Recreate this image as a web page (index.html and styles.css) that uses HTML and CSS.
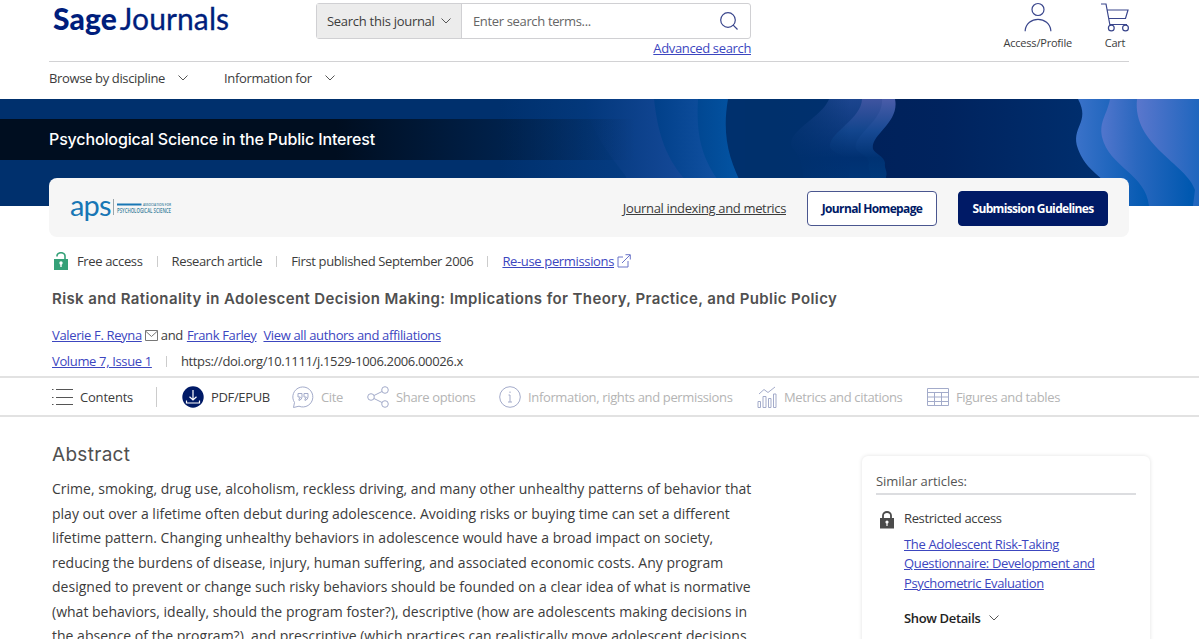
FILE: index.html
```html
<!DOCTYPE html>
<html lang="en">
  <head>
    <meta charset="UTF-8" />
    <meta name="viewport" content="width=device-width, initial-scale=1.0" />
    <title>Risk and Rationality in Adolescent Decision Making</title>
    <link rel="stylesheet" href="styles.css">
  </head>
  <body>
    <header class="header">
      <div class="header-top">
        <a class="logo"><b>Sage</b><span>Journals</span></a>
        <div class="search">
          <div class="search-box">
            <div class="search-scope">
              <span>Search this journal</span>
              <svg class="chevron" width="10" height="6" viewBox="0 0 10 6"><path d="M.5.5 5 5 9.5.5" /></svg>
            </div>
            <div class="search-field">
              <span>Enter search terms...</span>
              <svg class="line-icon" width="18" height="18" viewBox="0 0 18 18"><circle cx="8" cy="8" r="7.3" /><path d="m13.2 13.2 4.3 4.3" /></svg>
            </div>
          </div>
          <a class="link">Advanced search</a>
        </div>
        <div class="user-links">
          <a class="user-link">
            <svg class="line-icon" width="28" height="30" viewBox="0 0 28 30"><circle cx="14" cy="7.500" r="6" /><path d="M1.200 29.200v-1C2 21.500 7.500 17.300 14 17.300s12 4.200 12.800 10.900v1" /></svg>
            <span>Access/Profile</span>
          </a>
          <a class="user-link">
            <svg class="line-icon" width="28" height="30" viewBox="0 0 28 30"><path d="M0 2h5l4 21.500M6.500 8H27l-2.500 8.500H8M9 22.500h17" /><circle cx="10.300" cy="26" r="2.900" /><circle cx="24.500" cy="26" r="2.900" /></svg>
            <span>Cart</span>
          </a>
        </div>
      </div>
      <nav class="nav">
        <a>Browse by discipline <svg class="chevron" width="10" height="6" viewBox="0 0 10 6"><path d="M.5.5 5 5 9.5.5" /></svg></a>
        <a>Information for <svg class="chevron" width="10" height="6" viewBox="0 0 10 6"><path d="M.5.5 5 5 9.5.5" /></svg></a>
      </nav>
    </header>

    <section class="banner">
      <svg class="banner-art" width="1199" height="107" viewBox="0 0 1199 107">
        <defs>
          <linearGradient id="wave1" gradientUnits="userSpaceOnUse" x1="500" x2="640"><stop offset="0" stop-color="#00306d" /><stop offset="1" stop-color="#053d84" /></linearGradient>
          <linearGradient id="wave2" gradientUnits="userSpaceOnUse" x1="570" x2="690"><stop offset="0" stop-color="#003577" /><stop offset="1" stop-color="#164a9a" /></linearGradient>
          <linearGradient id="wave3" gradientUnits="userSpaceOnUse" x1="650" x2="728"><stop offset="0" stop-color="#003f88" /><stop offset="1" stop-color="#1453a5" /></linearGradient>
          <linearGradient id="wave4" gradientUnits="userSpaceOnUse" x1="690" x2="745"><stop offset="0" stop-color="#00458f" /><stop offset="1" stop-color="#0456a6" /></linearGradient>
          <linearGradient id="face1" x2="0" y2="1"><stop offset="0" stop-color="#4a5ca8" /><stop offset=".3" stop-color="#174993" /><stop offset=".55" stop-color="#003273" /><stop offset="1" stop-color="#014184" /></linearGradient>
          <linearGradient id="face2" x2="0" y2="1"><stop offset="0" stop-color="#3f54a0" /><stop offset=".3" stop-color="#12458d" /><stop offset=".55" stop-color="#003071" /><stop offset="1" stop-color="#003d80" /></linearGradient>
          <linearGradient id="face3" x2="0" y2="1"><stop offset="0" stop-color="#1c458e" /><stop offset=".55" stop-color="#003072" /><stop offset="1" stop-color="#003879" /></linearGradient>
          <linearGradient id="fade" gradientUnits="userSpaceOnUse" x1="745" x2="850"><stop offset="0" stop-color="#00306c" /><stop offset=".3" stop-color="#00306c" /><stop offset="1" stop-color="#00306c" stop-opacity="0" /></linearGradient>
          <linearGradient id="right1" gradientUnits="userSpaceOnUse" x1="1076" x2="1150"><stop offset="0" stop-color="#3b72c9" /><stop offset="1" stop-color="#0058b0" /></linearGradient>
          <linearGradient id="right2" gradientUnits="userSpaceOnUse" x1="1100" x2="1190"><stop offset="0" stop-color="#5376cd" /><stop offset=".4" stop-color="#2b68bf" /><stop offset="1" stop-color="#0058b0" /></linearGradient>
          <linearGradient id="right3" gradientUnits="userSpaceOnUse" x1="1135" x2="1199"><stop offset="0" stop-color="#5c77cd" /><stop offset="1" stop-color="#1f66be" /></linearGradient>
          <linearGradient id="deep" gradientUnits="userSpaceOnUse" x1="855" x2="1110"><stop offset="0" stop-color="#00215a" /><stop offset=".35" stop-color="#00235e" /><stop offset="1" stop-color="#003070" /></linearGradient>
        </defs>
        <rect width="1199" height="107" fill="#00306d" />
        <path d="M480 0H728C722 35 728 60 744 90L752 107H480Z" fill="url(#wave4)" />
        <path d="M480 0H698C696 35 701 58 720 84L735 107H480Z" fill="url(#wave3)" />
        <path d="M480 0H654C658 36 666 60 688 84L706 107H480Z" fill="url(#wave2)" />
        <path d="M480 0H585C590 30 605 50 625 76L640 107H480Z" fill="url(#wave1)" />
        <path d="M850 0H1110V107H850Z" fill="url(#deep)" />
        <path d="M745 0H895C900 24 870 36 873 50C875 55 884 57 885 64C884 70 888 72 886 78L890 107H745Z" fill="url(#face1)" />
        <path d="M745 0H882C884 22 852 36 856 50C861 56 868 56 869 64C867 70 872 74 870 79L874 107H745Z" fill="url(#face2)" />
        <path d="M745 0H862C862 20 828 34 830 48C833 56 848 55 850 64L848 107H745Z" fill="url(#face3)" />
        <path d="M745 0H829C822 18 790 30 791 46C796 56 806 58 804 107H745Z" fill="#00306f" />
        <path d="M745 0H850V107H745Z" fill="url(#fade)" />
        <path d="M1078 0C1091 24 1070 28 1078 50C1085 68 1094 72 1106 84L1118 107H1199V0Z" fill="url(#right1)" />
        <path d="M1110 0C1107 16 1099 22 1102 38C1109 68 1146 75 1149 107H1199V0Z" fill="url(#right2)" />
        <path d="M1137 0C1132 46 1187 65 1195 91L1193 107H1199V0Z" fill="url(#right3)" />
      </svg>
      <div class="banner-title">Psychological Science in the Public Interest</div>
    </section>

    <section class="journal-bar">
      <div class="aps">
        <span class="aps-name">aps</span>
        <svg width="60" height="24" viewBox="0 0 60 24">
          <path d="M1.500 3v16" stroke="#9aa5ab" fill="none" />
          <path d="M5 8.500h24.500" stroke="#1877b5" stroke-width="2" />
          <text x="31" y="9.500" textLength="28" lengthAdjust="spacingAndGlyphs" class="aps-small">ASSOCIATION FOR</text>
          <text x="5" y="16.500" textLength="54" lengthAdjust="spacingAndGlyphs" class="aps-large">PSYCHOLOGICAL SCIENCE</text>
        </svg>
      </div>
      <a class="indexing">Journal indexing and metrics</a>
      <a class="button">Journal Homepage</a>
      <a class="button button-dark">Submission Guidelines</a>
    </section>

    <main>
      <section class="article-head">
        <div class="meta">
          <svg class="lock" width="14" height="18" viewBox="0 0 14 18"><path d="M3 4.500V4a4 3.300 0 0 1 8 0v3" fill="none" stroke="#35a178" stroke-width="1.600" /><path d="M0 7h14v11H0z" fill="#35a178" /><circle cx="7" cy="11" r="1.700" fill="#fff" /><path d="M6.300 11h1.400v4H6.300z" fill="#fff" /></svg>
          <span>Free access</span>
          <i class="divider"></i>
          <span>Research article</span>
          <i class="divider"></i>
          <span>First published September 2006</span>
          <i class="divider"></i>
          <a class="link">Re-use permissions</a>
          <svg class="external" width="14" height="14" viewBox="0 0 14 14"><path d="M6 3H1v10h10V7M5 9l8-8M8.500.7h4.800v4.800" /></svg>
        </div>
        <h1 class="title">Risk and Rationality in Adolescent Decision Making: Implications for Theory, Practice, and Public Policy</h1>
        <div class="authors">
          <a class="link">Valerie F. Reyna</a>
          <svg class="mail" width="13" height="11" viewBox="0 0 13 11"><path d="M.5.5h12v10H.5zM.5 1l6 5.500 6-5.500" /></svg>
          <span>and</span>
          <a class="link frank">Frank Farley</a>
          <a class="link">View all authors and affiliations</a>
        </div>
        <div class="volume">
          <a class="link">Volume 7, Issue 1</a>
          <i class="divider"></i>
          <span>https://doi.org/10.1111/j.1529-1006.2006.00026.x</span>
        </div>
      </section>

      <div class="toolbar">
        <a class="tool tool-contents">
          <svg width="21" height="18" viewBox="0 0 21 18"><path d="M4 1.500h17M4 9.500h17M4 16.500h17M0 1.500h1.500M0 9.500h1.500M0 16.500h1.500" stroke="#555" fill="none" /></svg>
          <span>Contents</span>
        </a>
        <a class="tool tool-pdf">
          <svg width="22" height="22" viewBox="0 0 22 22"><circle cx="11" cy="11" r="10.700" fill="#001a66" /><path d="M11 4v10M7.500 10.700 11 14l3.500-3.300M4.500 14.500V17h13v-2.500" fill="none" stroke="#fff" stroke-width="1.200" /></svg>
          <span>PDF/EPUB</span>
        </a>
        <a class="tool muted tool-cite">
          <svg class="tool-icon" width="22" height="22" viewBox="0 0 22 22"><path d="M2.500 16.500A10 10 0 1 1 7 20.200L1.500 21.500z" /><path d="M6 7.500h4V11q0 2.500-3 3.500v-1.700q1.300-.5 1.300-1.800H6zM12 7.500h4V11q0 2.500-3 3.500v-1.700q1.300-.5 1.300-1.800H12z" /></svg>
          <span>Cite</span>
        </a>
        <a class="tool muted tool-share">
          <svg class="tool-icon" width="22" height="22" viewBox="0 0 22 22"><circle cx="4" cy="11" r="3.300" /><circle cx="18" cy="4" r="3.300" /><circle cx="18" cy="18" r="3.300" /><path d="m7 9.500 8-4M7 12.500l8 4" /></svg>
          <span>Share options</span>
        </a>
        <a class="tool muted tool-info">
          <svg class="tool-icon" width="22" height="22" viewBox="0 0 22 22"><circle cx="11" cy="11" r="10.300" /><path d="M9.500 9H11v7M9 16h4M11 5.500v1.500" /></svg>
          <span>Information, rights and permissions</span>
        </a>
        <a class="tool muted tool-metrics">
          <svg class="tool-icon" width="20" height="22" viewBox="0 0 20 22"><path d="M1 21.500v-6h2.500v6zM6 21.500v-11h3v11zM11.500 21.500v-9h2.500v9zM16.500 21.500V8H19v13.500zM2 8l5-4.500 4 3L18 1" /></svg>
          <span>Metrics and citations</span>
        </a>
        <a class="tool muted">
          <svg class="tool-icon" width="22" height="18" viewBox="0 0 22 18"><path d="M.5.5h21v17H.5zM.5 4.500h21M.5 9h21M.5 13.500h21M7.500 4.500v13M14.500 4.500v13" /></svg>
          <span>Figures and tables</span>
        </a>
      </div>

      <div class="content">
        <article class="abstract">
          <h2>Abstract</h2>
          <p>
            Crime, smoking, drug use, alcoholism, reckless driving, and many other unhealthy patterns of behavior that<br />
            play out over a lifetime often debut during adolescence. Avoiding risks or buying time can set a different<br />
            lifetime pattern. Changing unhealthy behaviors in adolescence would have a broad impact on society,<br />
            reducing the burdens of disease, injury, human suffering, and associated economic costs. Any program<br />
            designed to prevent or change such risky behaviors should be founded on a clear idea of what is normative<br />
            (what behaviors, ideally, should the program foster?), descriptive (how are adolescents making decisions in<br />
            the absence of the program?), and prescriptive (which practices can realistically move adolescent decisions
          </p>
        </article>
        <aside class="similar">
          <h3>Similar articles:</h3>
          <div class="similar-item">
            <svg width="14" height="18" viewBox="0 0 14 18"><path d="M3 8V4.500a4 3.500 0 0 1 8 0V8" fill="none" stroke="#4b4b4b" stroke-width="1.800" /><path d="M0 7h14v10.500H0z" fill="#4b4b4b" /><circle cx="7" cy="11" r="1.600" fill="#fff" /><path d="M6.400 11h1.200v4H6.400z" fill="#fff" /></svg>
            <div>
              <div class="restricted">Restricted access</div>
              <a class="link similar-link">The Adolescent Risk-Taking<br />Questionnaire: Development and<br />Psychometric Evaluation</a>
              <div class="details">Show Details <svg class="chevron" width="10" height="6" viewBox="0 0 10 6"><path d="M.5.5 5 5 9.5.5" /></svg></div>
            </div>
          </div>
        </aside>
      </div>
    </main>
  </body>
</html>
```

FILE: styles.css
```css
* {
  box-sizing: border-box;
}
body {
  margin: 0;
  height: 639px;
  overflow: hidden;
  font-family: "Open Sans", sans-serif;
  font-size: 13px;
  line-height: 18px;
  letter-spacing: -0.35px;
  color: #3c3c3c;
  background-color: #fff;
}
svg {
  display: block;
  flex-shrink: 0;
}
.link {
  color: #3c46bf;
  text-decoration: underline;
}
.chevron {
  fill: none;
  stroke: #555;
}
.line-icon {
  fill: none;
  stroke: #3a468c;
  stroke-width: 1.2;
}
.header {
  height: 99px;
  padding: 0 70px 0 49px;
}
.header-top {
  display: flex;
  height: 62px;
  border-bottom: 1px solid #d2d2d4;
}
.logo {
  display: flex;
  gap: 3px;
  width: 267px;
  padding-left: 4px;
  font-family: Lato, sans-serif;
  font-size: 30px;
  line-height: 36px;
  letter-spacing: 0.1px;
  color: #001e7c;
}
.logo b {
  font-weight: 900;
}
.logo span {
  -webkit-text-stroke: 0.3px #001e7c;
}
.search {
  width: 435px;
  padding-top: 3px;
  text-align: right;
}
.search-box {
  display: flex;
  height: 36px;
  border: 1px solid #d0d0d3;
  border-radius: 3px;
  text-align: left;
}
.search-scope {
  display: flex;
  align-items: center;
  gap: 6px;
  width: 145px;
  padding-left: 10px;
  letter-spacing: -0.28px;
  background-color: #ececec;
  border-right: 1px solid #d0d0d3;
}
.search-field {
  display: flex;
  flex: 1;
  align-items: center;
  justify-content: space-between;
  padding: 0 12px 0 11px;
  color: #666;
}
.user-links {
  display: flex;
  flex: 1;
  justify-content: flex-end;
  gap: 29px;
  padding-top: 2px;
}
.user-link {
  display: flex;
  flex-direction: column;
  align-items: center;
  gap: 2px;
  font-size: 11px;
  letter-spacing: -0.2px;
}
.nav {
  display: flex;
  gap: 36px;
  padding-top: 7px;
}
.nav a {
  display: flex;
  align-items: center;
  gap: 13px;
}
.banner {
  position: relative;
  height: 107px;
  padding-top: 20px;
}
.banner-art {
  position: absolute;
  top: 0;
  left: 0;
}
.banner-title {
  position: relative;
  height: 41px;
  padding-left: 49px;
  font-family: Inter, sans-serif;
  font-size: 16px;
  font-weight: 500;
  line-height: 41px;
  letter-spacing: -0.14px;
  color: #fff;
  background: linear-gradient(90deg, #000e20 0, #000e20 28%, rgba(0, 14, 32, 0) 53%);
}
.journal-bar {
  position: relative;
  display: flex;
  align-items: center;
  height: 59px;
  margin: -28px 70px 0 49px;
  padding: 1px 21px 0;
  background-color: #f6f6f6;
  border-radius: 8px;
}
.aps {
  display: flex;
  flex: 1;
  align-items: center;
  gap: 1px;
}
.aps-name {
  width: 41px;
  margin-top: -6px;
  font-family: Lato, sans-serif;
  font-size: 29px;
  line-height: 28px;
  letter-spacing: -0.8px;
  color: #1877b5;
}
.aps-small,
.aps-large {
  font-family: "Open Sans", sans-serif;
  font-weight: 600;
  letter-spacing: 0;
  fill: #38809b;
}
.aps-small {
  font-size: 4px;
}
.aps-large {
  font-size: 7px;
}
.indexing {
  margin-right: 21px;
  text-decoration: underline;
}
.button {
  width: 130px;
  height: 35px;
  font-size: 12px;
  font-weight: 700;
  line-height: 34px;
  letter-spacing: -0.65px;
  text-align: center;
  color: #001a66;
  background-color: #fff;
  border: 1px solid #4a568f;
  border-radius: 4px;
}
.button-dark {
  width: 150px;
  margin-left: 21px;
  color: #fff;
  background-color: #001a66;
  border-color: #001a66;
}
.article-head {
  height: 139px;
  padding: 15px 52px 0;
}
.meta,
.authors,
.volume {
  display: flex;
  align-items: center;
  white-space: nowrap;
}
.divider {
  width: 1px;
  height: 11px;
  margin: 0 14px;
  background-color: #ccc;
}
.lock {
  margin: 0 9px 0 2px;
}
.external {
  margin-left: 3px;
  fill: none;
  stroke: #6a74c8;
}
.title {
  margin: 17px 0 16px;
  font-family: Inter, sans-serif;
  font-size: 15px;
  font-weight: 600;
  line-height: 23px;
  letter-spacing: 0.39px;
  white-space: nowrap;
  color: #505050;
}
.authors {
  gap: 3px;
  height: 18px;
}
.mail {
  fill: none;
  stroke: #777;
}
.frank {
  margin: 0 4px 0 1px;
}
.volume {
  margin-top: 8px;
}
.toolbar {
  display: flex;
  align-items: center;
  height: 41px;
  padding-left: 52px;
  border-top: 2px solid #e2e2e2;
  border-bottom: 2px solid #e2e2e2;
}
.tool {
  display: flex;
  align-items: center;
  gap: 7px;
  white-space: nowrap;
}
.tool-contents {
  width: 105px;
  height: 20px;
  margin-right: 25px;
  letter-spacing: -0.2px;
  border-right: 1px solid #ccc;
}
.muted {
  color: #b4b4b4;
}
.tool-icon {
  fill: none;
  stroke: #a3abca;
}
.tool-pdf {
  width: 110px;
}
.tool-cite {
  width: 75px;
}
.tool-share {
  width: 132px;
}
.tool-info {
  width: 258px;
}
.tool-metrics {
  width: 170px;
}
.content {
  display: flex;
  justify-content: space-between;
  padding: 0 49px 0 52px;
}
.abstract h2 {
  margin: 25px 0 10px;
  font-family: Inter, sans-serif;
  font-size: 19px;
  font-weight: 400;
  line-height: 25px;
  letter-spacing: 0.3px;
  color: #505050;
}
.abstract p {
  margin: 0;
  font-size: 14px;
  line-height: 24.5px;
  letter-spacing: 0.01px;
  white-space: nowrap;
}
.similar {
  width: 288px;
  height: 300px;
  margin-top: 39px;
  padding: 16px 14px;
  border-radius: 6px;
  box-shadow: 0 0 4px rgba(0, 0, 0, 0.12);
}
.similar h3 {
  margin: 0;
  padding-bottom: 3px;
  font-size: 13px;
  font-weight: 400;
  letter-spacing: -0.05px;
  color: #555;
  border-bottom: 2px solid #dcdde0;
}
.similar-item {
  display: flex;
  gap: 10px;
  padding: 15px 4px;
}
.similar-item > svg {
  margin-top: 1px;
}
.restricted {
  margin: -1px 0 8px;
}
.similar-link {
  display: block;
  line-height: 19.3px;
}
.details {
  display: flex;
  align-items: center;
  gap: 9px;
  margin-top: 16px;
  font-weight: 600;
  color: #222;
}
```
